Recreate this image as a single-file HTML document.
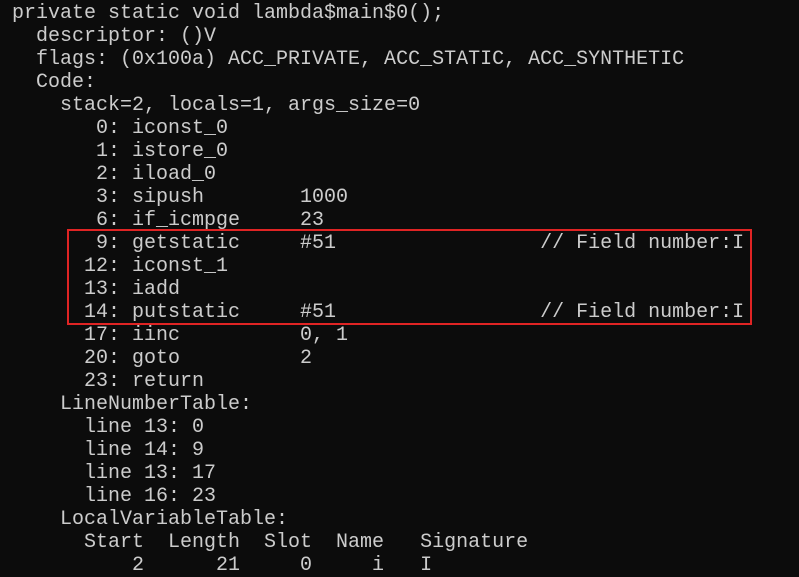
<!DOCTYPE html>
<html><head><meta charset="utf-8"><style>
html,body{margin:0;padding:0;background:#0c0c0c;width:799px;height:570px;overflow:hidden}
pre{margin:0;position:absolute;left:12px;top:2px;font-family:"Liberation Mono",monospace;font-size:20px;line-height:23px;color:#cccccc}
.box{position:absolute;left:67px;top:229px;width:681px;height:92px;border:2px solid #e02424}
</style></head><body>
<pre>private static void lambda$main$0();
  descriptor: ()V
  flags: (0x100a) ACC_PRIVATE, ACC_STATIC, ACC_SYNTHETIC
  Code:
    stack=2, locals=1, args_size=0
       0: iconst_0
       1: istore_0
       2: iload_0
       3: sipush        1000
       6: if_icmpge     23
       9: getstatic     #51                 // Field number:I
      12: iconst_1
      13: iadd
      14: putstatic     #51                 // Field number:I
      17: iinc          0, 1
      20: goto          2
      23: return
    LineNumberTable:
      line 13: 0
      line 14: 9
      line 13: 17
      line 16: 23
    LocalVariableTable:
      Start  Length  Slot  Name   Signature
          2      21     0     i   I</pre>
<div class="box"></div>
</body></html>
